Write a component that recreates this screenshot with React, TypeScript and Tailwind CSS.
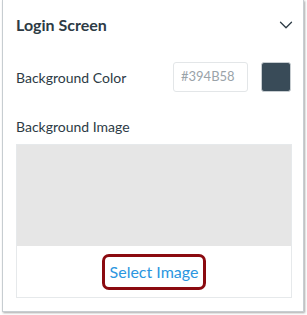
import { ChevronDown } from "lucide-react";

const LoginScreenPanel = () => {
  return (
    <div className="w-[307px] h-[315px] bg-white" style={{ fontFamily: "Lato, 'Noto Sans', sans-serif" }}>
      <div className="ml-[2px] w-[302px] h-[312px] border-l border-r border-b border-[#c7cdd1] shadow-[1px_1px_2px_rgba(0,0,0,0.35)] bg-white pl-[13px] pr-[11px] pt-[14px]">
        <div className="flex items-center justify-between h-[22px]">
          <h2 className="text-[16px] font-bold text-[#2d3b45] leading-none">Login Screen</h2>
          <ChevronDown className="w-[22px] h-[22px] text-[#2d3b45] -mr-[5px]" strokeWidth={1.4} />
        </div>

        <div className="flex items-center mt-[26px]">
          <span className="text-[14px] text-[#2d3b45] flex-1">Background Color</span>
          <div className="w-[75px] h-[30px] border border-[#e3e6e8] rounded-[3px] flex items-center px-[7px] text-[13px] text-[#9aa3a9]">
            #394B58
          </div>
          <div className="w-[30px] h-[30px] ml-[13px] mr-[1px] rounded-[3px] bg-[#394b58] border border-[#c7cdd1]" />
        </div>

        <div className="mt-[28px] text-[14px] text-[#2d3b45] leading-none">Background Image</div>

        <div className="mt-[10px] border border-[#e6e9eb]">
          <div className="h-[101px] bg-[#e6e6e6]" />
          <div className="h-[51px] flex items-center justify-center">
            <span className="border-[3px] border-[#8b0a10] rounded-[7px] px-[5px] h-[36px] flex items-center text-[16px] text-[#2b96e0]">
              Select Image
            </span>
          </div>
        </div>
      </div>
    </div>
  );
};

export default function App() {
  return <LoginScreenPanel />;
}
